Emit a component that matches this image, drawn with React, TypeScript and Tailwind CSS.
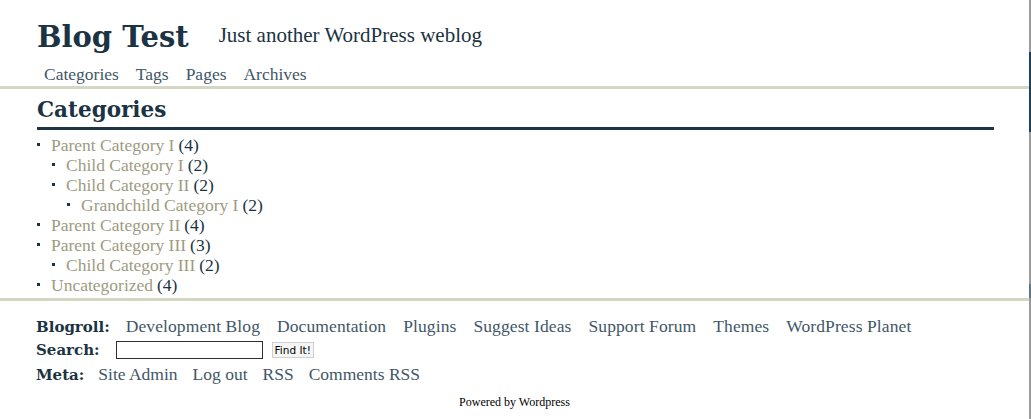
import React from "react";

const serif = { fontFamily: '"Liberation Serif", "Times New Roman", serif' };
const bold = { fontFamily: '"DejaVu Serif", Georgia, serif' };

type Cat = { name: string; count: number; level: number };
const cats: Cat[] = [
  { name: "Parent Category I", count: 4, level: 0 },
  { name: "Child Category I", count: 2, level: 1 },
  { name: "Child Category II", count: 2, level: 1 },
  { name: "Grandchild Category I", count: 2, level: 2 },
  { name: "Parent Category II", count: 4, level: 0 },
  { name: "Parent Category III", count: 3, level: 0 },
  { name: "Child Category III", count: 2, level: 1 },
  { name: "Uncategorized", count: 4, level: 0 },
];

const blogroll = [
  "Development Blog",
  "Documentation",
  "Plugins",
  "Suggest Ideas",
  "Support Forum",
  "Themes",
  "WordPress Planet",
];
const meta = ["Site Admin", "Log out", "RSS", "Comments RSS"];

export default function App() {
  return (
    <div className="flex w-[1031px] h-[419px] bg-white overflow-hidden" style={serif}>
      <div className="flex-1 flex flex-col">
        {/* Header */}
        <div className="px-[37px] pt-[19px] pb-[1px] border-b-[3px] border-[#d4d8c2]">
          <div className="flex items-start h-[36px] gap-[30px]">
            <div className="text-[29px] leading-[36px] font-bold text-[#1b3342]" style={bold}>
              Blog Test
            </div>
            <div className="text-[21px] leading-[32px] text-[#1b3342]">Just another WordPress weblog</div>
          </div>
          <div className="flex gap-[17px] mt-[8px] h-[22px] pl-[7px] text-[17.5px] leading-[22px] text-[#3f5768]">
            <span>Categories</span>
            <span>Tags</span>
            <span>Pages</span>
            <span>Archives</span>
          </div>
        </div>

        {/* Content */}
        <div className="pl-[37px] pr-[35px] pb-[3px] border-b-[3px] border-[#d4d8c2]">
          <h2
            className="mt-[8px] text-[21.5px] leading-[26px] font-bold text-[#1b3342] pb-[4px] border-b-[3px] border-[#1e3545]"
            style={bold}
          >
            Categories
          </h2>
          <ul className="mt-[5px] flex flex-col">
            {cats.map((c, i) => (
              <li
                key={i}
                className="flex items-center h-[20px] text-[17.5px] leading-[20px]"
                style={{ paddingLeft: c.level * 15 }}
              >
                <span className="w-[3px] h-[3px] bg-[#1b3342] mr-[11px] mt-[-2px] shrink-0" />
                <span className="text-[#9e9b80]">{c.name}</span>
                <span className="text-[#1b3342] ml-[4px]">({c.count})</span>
              </li>
            ))}
          </ul>
        </div>

        {/* Footer */}
        <div className="px-[36px] pt-[13px] flex flex-col">
          <div className="flex items-baseline gap-[17px] h-[24px] leading-[24px]">
            <span className="text-[15px] font-bold text-[#1b3342] mr-[-1px]" style={bold}>
              Blogroll:
            </span>
            {blogroll.map((b) => (
              <span key={b} className="text-[17.5px] tracking-[0.1px] text-[#3f5768]">
                {b}
              </span>
            ))}
          </div>
          <div className="flex items-center h-[24px]">
            <span className="text-[15px] leading-[24px] font-bold text-[#1b3342] mr-[16px]" style={bold}>
              Search:
            </span>
            <div className="w-[147px] h-[18px] border border-[#2a2f33] bg-white" />
            <div
              className="ml-[9px] h-[16px] px-[2px] border border-[#cfcfcf] bg-[#f5f5f5] text-[10.5px] leading-[14px] text-black"
              style={{ fontFamily: '"DejaVu Sans", "Liberation Sans", sans-serif' }}
            >
              Find It!
            </div>
          </div>
          <div className="flex items-baseline gap-[15px] h-[24px] leading-[24px]">
            <span className="text-[15px] font-bold text-[#1b3342] mr-[-1px]" style={bold}>
              Meta:
            </span>
            {meta.map((m) => (
              <span key={m} className="text-[17.5px] text-[#3f5768]">
                {m}
              </span>
            ))}
          </div>
          <div className="mt-[9px] text-center text-[12px] leading-[14px] text-black">Powered by Wordpress</div>
        </div>
      </div>
      {/* right window edge */}
      <div className="w-[2px] flex flex-col">
        <div className="h-[52px] bg-[#9a9a9a]" />
        <div className="h-[80px] bg-[#1e4058]" />
        <div className="h-[152px] bg-[#9a9a9a]" />
        <div className="h-[14px] bg-[#5d7585]" />
        <div className="flex-1 bg-[#9a9a9a]" />
      </div>
    </div>
  );
}
